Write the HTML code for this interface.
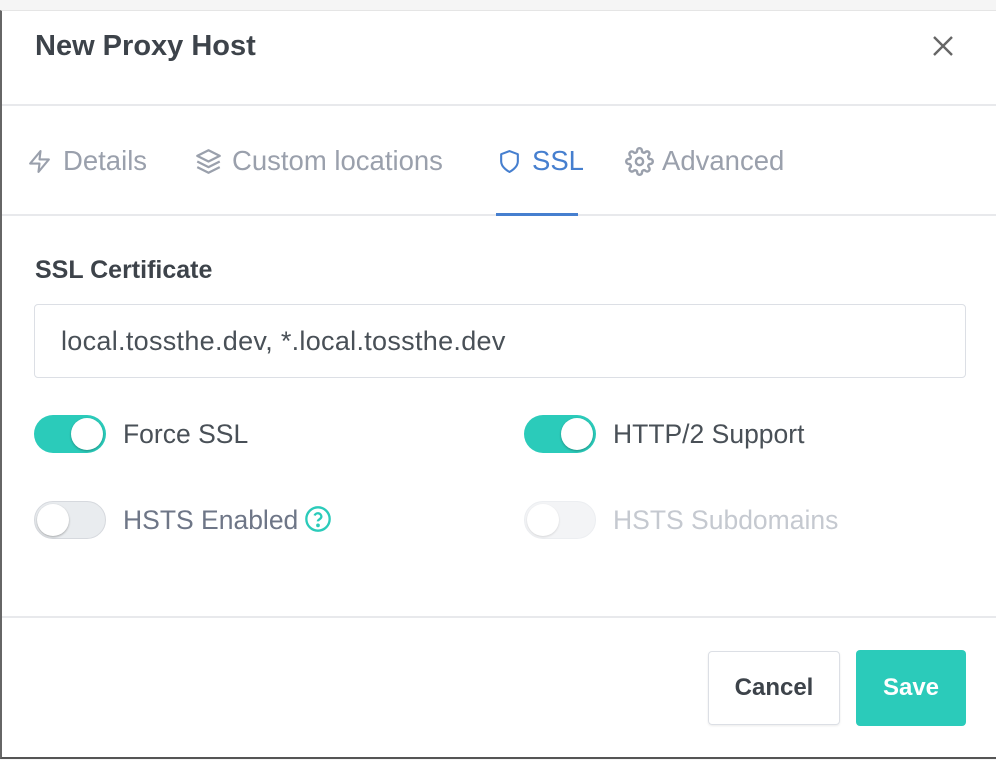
<!DOCTYPE html>
<html><head><meta charset="utf-8"><style>
*{box-sizing:border-box;margin:0;padding:0}
body{width:996px;height:760px;background:#f5f5f5;font-family:"Liberation Sans",sans-serif;position:relative;overflow:hidden}
.modal{position:absolute;left:0;top:10px;width:996px;height:749px;background:#fff;border-left:2px solid #666;border-bottom:2px solid #555;border-top:1px solid #e5e5e5}
.a{position:absolute;white-space:nowrap}
.hr{position:absolute;left:2px;right:0;height:2px;background:#e8e9ec}
.tt{position:absolute;top:145px;font-size:27.5px;color:#9aa0ac;white-space:nowrap}
.ic{position:absolute}
.tg{position:absolute;width:72px;height:38px;border-radius:19px}
.tg .k{position:absolute;top:3px;width:32px;height:32px;border-radius:50%;background:#fff;box-shadow:0 1px 2px rgba(0,0,0,.3)}
.lbl{position:absolute;font-size:26.5px;color:#495057;white-space:nowrap}
</style></head><body>
<div class="modal"></div>
<div class="a" style="left:35px;top:30px;font-size:29px;font-weight:bold;color:#3d434a">New Proxy Host</div>
<svg class="a" style="left:932px;top:35px" width="22" height="22" viewBox="0 0 22 22"><path d="M2 2L20 20M20 2L2 20" stroke="#666" stroke-width="2.4"/></svg>
<div class="hr" style="top:104px"></div>
<svg class="ic" style="left:27px;top:148px" width="25" height="27" viewBox="0 0 24 24" fill="none" stroke="#9aa0ac" stroke-width="2" stroke-linejoin="round"><path d="M13 2L3 14h9l-1 8 10-12h-9l1-8z"/></svg>
<div class="tt" style="left:63px">Details</div>
<svg class="ic" style="left:195px;top:148px" width="27" height="27" viewBox="0 0 24 24" fill="none" stroke="#9aa0ac" stroke-width="2" stroke-linejoin="round"><path d="M12 2L2 7l10 5 10-5-10-5z M2 17l10 5 10-5 M2 12l10 5 10-5"/></svg>
<div class="tt" style="left:232px">Custom locations</div>
<svg class="ic" style="left:497px;top:148px" width="25" height="27" viewBox="0 0 24 24" fill="none" stroke="#467fcf" stroke-width="2" stroke-linejoin="round"><path d="M12 22s8-4 8-10V5l-8-3-8 3v7c0 6 8 10 8 10z"/></svg>
<div class="tt" style="left:532px;color:#467fcf">SSL</div>
<svg class="ic" style="left:625px;top:147px" width="29" height="29" viewBox="0 0 24 24" fill="none" stroke="#9aa0ac" stroke-width="2"><circle cx="12" cy="12" r="3"/><path d="M19.4 15a1.65 1.65 0 0 0 .33 1.82l.06.06a2 2 0 1 1-2.830 2.83l-.06-.06a1.65 1.65 0 0 0-1.82-.33 1.65 1.65 0 0 0-1 1.51V21a2 2 0 1 1-4 0v-.09A1.65 1.65 0 0 0 9 19.4a1.65 1.65 0 0 0-1.82.33l-.06.06a2 2 0 1 1-2.83-2.830l.06-.06A1.65 1.65 0 0 0 4.68 15a1.65 1.65 0 0 0-1.51-1H3a2 2 0 1 1 0-4h.09A1.650 1.65 0 0 0 4.6 9a1.65 1.65 0 0 0-.33-1.82l-.06-.06a2 2 0 1 1 2.83-2.83l.06.06A1.65 1.65 0 0 0 9 4.68 1.65 1.65 0 0 0 10 3.17V3a2 2 0 1 1 4 0v.09a1.65 1.65 0 0 0 1 1.51 1.65 1.65 0 0 0 1.82-.33l.06-.06a2 2 0 1 1 2.83 2.83l-.06.06A1.65 1.65 0 0 0 19.4 9a1.65 1.65 0 0 0 1.51 1H21a2 2 0 1 1 0 4h-.09a1.65 1.65 0 0 0-1.51 1z"/></svg>
<div class="tt" style="left:662px">Advanced</div>
<div class="hr" style="top:214px"></div>
<div class="a" style="left:496px;top:213px;width:82px;height:3px;background:#467fcf"></div>
<div class="a" style="left:35px;top:256px;font-size:25px;font-weight:bold;color:#3d434a">SSL Certificate</div>
<div class="a" style="left:34px;top:304px;width:932px;height:74px;border:1px solid #dcdfe5;border-radius:4px;font-size:27px;color:#495057;padding:21px 0 0 26px;letter-spacing:0.3px">local.tossthe.dev, *.local.tossthe.dev</div>
<div class="tg" style="left:34px;top:415px;background:#2bcbba"><div class="k" style="left:37px"></div></div>
<div class="lbl" style="left:123px;top:419px">Force SSL</div>
<div class="tg" style="left:524px;top:415px;background:#2bcbba"><div class="k" style="left:37px"></div></div>
<div class="lbl" style="left:613px;top:419px">HTTP/2 Support</div>
<div class="tg" style="left:34px;top:501px;background:#e9ecef;border:1px solid #d6d9de"><div class="k" style="left:2px;top:2px"></div></div>
<div class="lbl" style="left:123px;top:505px;color:#6e7687">HSTS Enabled</div>
<svg class="a" style="left:304px;top:505px" width="28" height="28" viewBox="0 0 24 24" fill="none" stroke="#2bcbba" stroke-width="2"><circle cx="12" cy="12" r="10"/><path d="M9.1 9a3 3 0 0 1 5.8 1c0 2-3 2.5-3 4"/><circle cx="12" cy="17.5" r=".6" fill="#2bcbba"/></svg>
<div class="tg" style="left:524px;top:501px;background:#f3f4f6;border:1px solid #eceef1"><div class="k" style="left:2px;top:2px;box-shadow:0 1px 2px rgba(0,0,0,.12)"></div></div>
<div class="lbl" style="left:613px;top:505px;color:#c5c9d0">HSTS Subdomains</div>
<div class="hr" style="top:616px"></div>
<div class="a" style="left:708px;top:651px;width:132px;height:74px;border:1px solid #dcdfe5;border-radius:4px;box-shadow:0 1px 2px rgba(0,0,0,.08);font-size:24px;font-weight:bold;color:#3d434a;text-align:center;line-height:72px">Cancel</div>
<div class="a" style="left:856px;top:650px;width:110px;height:76px;background:#2bcbba;border-radius:4px;font-size:24px;font-weight:bold;color:#fff;text-align:center;line-height:76px">Save</div>
</body></html>
